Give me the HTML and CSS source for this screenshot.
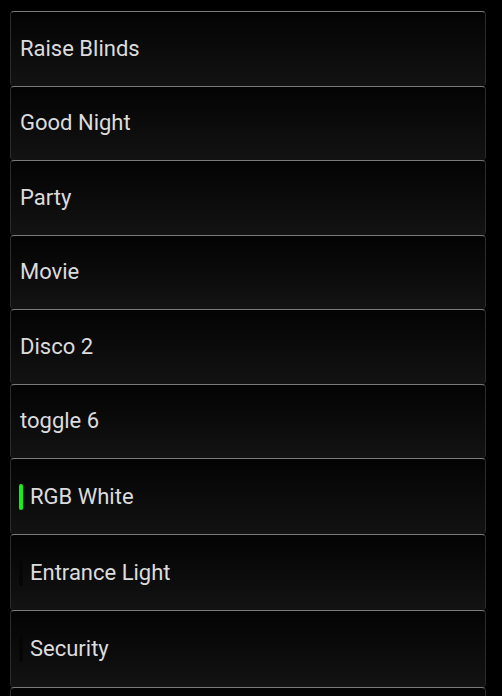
FILE: index.html
```html
<!DOCTYPE html>
<html lang="en">
<head>
    <meta charset="UTF-8">
    <meta name="viewport" content="width=device-width, initial-scale=1.0">
    <title>Scenes</title>
    <link rel="stylesheet" href="styles.css">
</head>
<body>
    <!-- scene buttons -->
    <div class="list">
        <div class="card"><span class="label">Raise Blinds</span></div>
        <div class="card"><span class="label">Good Night</span></div>
        <div class="card"><span class="label">Party</span></div>
        <div class="card"><span class="label">Movie</span></div>
        <div class="card"><span class="label">Disco 2</span></div>
        <div class="card"><span class="label">toggle 6</span></div>

        <!-- switches with state indicator -->
        <div class="card toggle"><span class="led on"></span><span class="label">RGB White</span></div>
        <div class="card toggle"><span class="led"></span><span class="label">Entrance Light</span></div>
        <div class="card toggle tall"><span class="led"></span><span class="label">Security</span></div>
        <div class="card toggle"></div>
    </div>
</body>
</html>
```

FILE: styles.css
```css
html, body {
    height: 100%;
    overflow: hidden;
}
body {
    font-family: Roboto, 'Noto Sans', sans-serif;
    margin: 0;
    padding: 0;
    background-color: #000;
    color: #dcdcdc;
}
.list {
    display: flex;
    flex-direction: column;
    padding: 11px 16px 0 10px;
}
.card {
    box-sizing: border-box;
    height: 74.5px;
    flex-shrink: 0;
    display: flex;
    align-items: center;
    padding: 0 8px 0 9px;
    border: 1px solid #2c2c2c;
    border-top-color: #7a7a7a;
    border-bottom: none;
    border-radius: 4px;
    background: linear-gradient(#030303, #131313);
}
.card.toggle {
    height: 76px;
    padding-left: 8px;
}
.card.tall {
    height: 77px;
}
.label {
    font-size: 22px;
    line-height: 26px;
}
.led {
    width: 4px;
    height: 26px;
    margin-right: 7px;
    border-radius: 2px;
    background-color: #060606;
}
.led.on {
    background-color: #14f014;
}
```
